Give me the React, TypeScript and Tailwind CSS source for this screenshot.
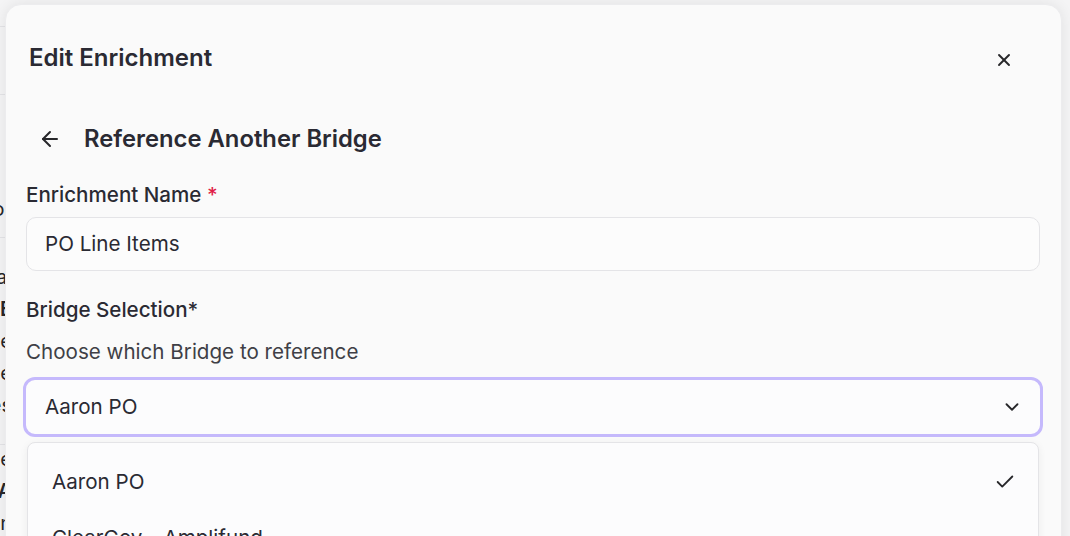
import React from 'react';
import { X, ArrowLeft, ChevronDown, Check } from 'lucide-react';

// fragments of the page that sits behind the dialog
const backRows: { h: number; lines: string[]; border?: boolean }[] = [
  { h: 27, lines: [], border: true },
  { h: 68, lines: [], border: true },
  { h: 85, lines: [] },
  { h: 58, lines: ['Vendor'], border: true },
  { h: 207, lines: ['Total', 'PO BE', 'Enable', 'Some value', 'Statuses'], border: true },
  { h: 91, lines: ['Name', 'PO A', 'Amen'] },
];

const BackgroundPage: React.FC = () => (
  <div className="flex flex-col w-[12px]">
    {backRows.map((r, i) => (
      <div key={i} className={`flex flex-col justify-center gap-[6px] overflow-hidden ${r.border ? 'border-b border-[#e4e4e7]' : ''}`} style={{ height: r.h }}>
        {r.lines.map((l, j) => (
          <div key={j} className={`text-[20px] leading-[26px] text-[#27272a] whitespace-nowrap flex justify-end w-[12px] ${j === 1 ? 'font-semibold' : ''}`}>
            <span>{l}</span>
          </div>
        ))}
      </div>
    ))}
  </div>
);

export default function App() {
  return (
    <div className="relative w-[1070px] h-[536px] overflow-hidden bg-[#f4f4f5] font-['Inter',sans-serif] text-[#27272a]">
      <BackgroundPage />

      {/* dialog */}
      <div className="absolute left-[5px] top-[4px] w-[1057px] h-[620px] bg-[#fafafa] rounded-[16px] shadow-[0_0_14px_rgba(0,0,0,0.08)] border border-[#ececee]">
        <div className="flex items-center justify-between pl-[23px] pr-[47px] pt-[36px]">
          <h2 className="text-[24px] font-semibold leading-[34px] text-[#2a2a33]">Edit Enrichment</h2>
          <X size={20} strokeWidth={2.25} className="text-[#27272a] mt-[4px]" />
        </div>

        <div className="flex flex-col pl-[20px] pr-[21px] pt-[47px]">
          <div className="flex items-center gap-[22px] pl-[12px]">
            <ArrowLeft size={24} strokeWidth={2} className="text-[#27272a]" />
            <h3 className="text-[23.8px] font-semibold leading-[34px] text-[#2a2a33]">Reference Another Bridge</h3>
          </div>

          <label className="mt-[25px] text-[20.6px] font-medium leading-[28px] text-[#2a2a33]">
            Enrichment Name <span className="text-[#e11d48]">*</span>
          </label>
          <div className="mt-[8px] h-[54px] rounded-[10px] border border-[#e4e4e7] bg-[#fcfcfc] flex items-center px-[18px] text-[20.6px] text-[#2a2a33]">
            PO Line Items
          </div>

          <label className="mt-[25px] text-[20.6px] font-medium leading-[28px] text-[#2a2a33]">Bridge Selection*</label>
          <p className="mt-[14px] text-[20.6px] leading-[28px] text-[#3f3f46]">Choose which Bridge to reference</p>

          <div className="mt-[11px] -mx-[3px] h-[60px] rounded-[12px] border-[3.5px] border-[#c5b9fc] bg-[#fcfcfd] flex items-center justify-between pl-[19px] pr-[17px] text-[20.6px] text-[#2a2a33]">
            <span>Aaron PO</span>
            <ChevronDown size={22} strokeWidth={2} className="text-[#27272a]" />
          </div>

          <div className="mt-[5px] mx-[1px] rounded-[8px] border border-[#e4e4e7] bg-[#fcfcfd] shadow-[0_2px_8px_rgba(0,0,0,0.06)] pt-[11px]">
            <div className="h-[56px] flex items-center justify-between pl-[24px] pr-[22px] text-[20.6px] text-[#2a2a33]">
              <span>Aaron PO</span>
              <Check size={22} strokeWidth={2} className="text-[#27272a]" />
            </div>
            <div className="h-[56px] flex items-center pl-[24px] text-[20.6px] text-[#2a2a33]">
              <span>ClearGov - Amplifund</span>
            </div>
          </div>
        </div>
      </div>
    </div>
  );
}
